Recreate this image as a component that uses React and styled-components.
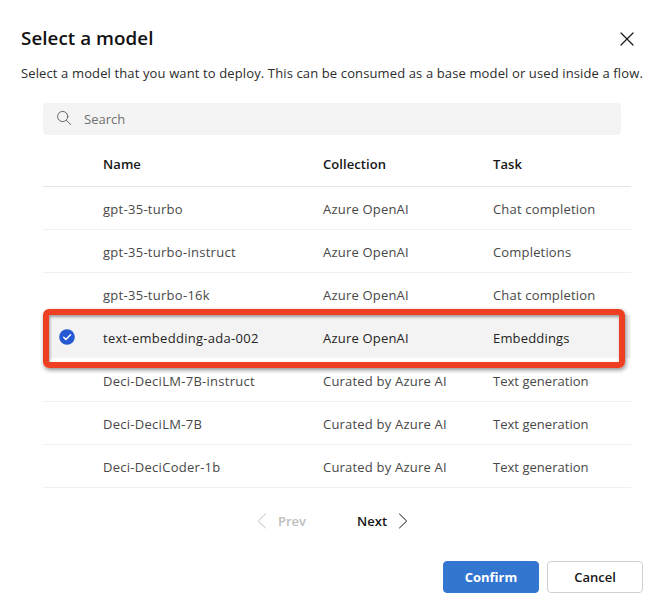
import React from "react";
import styled, { createGlobalStyle } from "styled-components";

const GlobalStyle = createGlobalStyle`
  * { box-sizing: border-box; }
  body {
    margin: 0;
    background: #fff;
    color: #2c2c2c;
    font: 400 13px/20px "Open Sans", "Noto Sans", sans-serif;
  }
  button { font: inherit; color: inherit; padding: 0; border: 0; background: none; }
`;

const Dialog = styled.main`
  width: 664px;
  height: 610px;
  padding: 24px 21px 0;
  overflow: hidden;
  background: #fff;
`;

const Header = styled.header`
  display: flex;
  justify-content: space-between;
  align-items: center;
  height: 28px;
  padding-right: 9px;
`;

const Title = styled.h1`
  margin: 0;
  font-size: 18.8px;
  line-height: 28px;
  font-weight: 600;
  color: #111;
  letter-spacing: 0.05px;
`;

const CloseButton = styled.button`
  display: flex;
  margin-top: 2px;
`;

const Description = styled.p`
  margin: 11px 0 0;
  height: 20px;
  white-space: nowrap;
  letter-spacing: 0.125px;
`;

const Content = styled.section`
  margin: 20px 12px 0 22px;
`;

const SearchBox = styled.label`
  display: flex;
  align-items: center;
  gap: 12px;
  width: 578px;
  height: 32px;
  padding-left: 13px;
  border-radius: 4px;
  background: #f4f4f4;
  color: #707070;

  svg { margin-top: -2px; }
`;

const Table = styled.div`
  position: relative;
  width: 588px;
  margin-top: 8px;
`;

const Row = styled.div`
  display: grid;
  grid-template-columns: 60px 220px 170px 1fr;
  align-items: center;
  height: 43px;
  border-bottom: 1px solid ${(p) => (p.$selected ? "#fff" : "#f0f0f0")};
  background: ${(p) => (p.$selected ? "#f3f3f3" : "transparent")};
  color: ${(p) => (p.$selected ? "#242424" : "#484848")};
  white-space: nowrap;
`;

const HeadRow = styled(Row)`
  height: 44px;
  padding-bottom: 1px;
  border-bottom-color: #e4e4e4;
  color: #161616;
  font-weight: 600;
  letter-spacing: 0.08px;
`;

const Cell = styled.span`
  padding-top: 1px;
  letter-spacing: ${(p) => p.$track}px;
`;

const Check = styled.span`
  display: flex;
  padding-left: 16px;
`;

const Highlight = styled.div`
  position: absolute;
  left: 0;
  top: 166px;
  width: 582px;
  height: 59px;
  border: 6px solid #ef3f22;
  border-radius: 6px;
  box-shadow: 1px 2px 4px rgba(0, 0, 0, 0.45), inset 1px 2px 3px rgba(0, 0, 0, 0.35);
`;

const Pager = styled.nav`
  display: flex;
  height: 20px;
  margin: 23px 0 0 214px;
  gap: 51px;
`;

const PageButton = styled.button`
  display: flex;
  align-items: center;
  gap: 11px;
  font-weight: 600;
  color: ${(p) => (p.$muted ? "#bdbdbd" : "#161616")};
`;

const Actions = styled.footer`
  display: flex;
  justify-content: flex-end;
  gap: 8px;
  margin-top: 30px;
`;

const ActionButton = styled.button`
  && {
    width: 96px;
    height: 32px;
    border: 1px solid ${(p) => (p.$primary ? "#3276cf" : "#d1d1d1")};
    border-radius: 4px;
    background: ${(p) => (p.$primary ? "#3276cf" : "#fff")};
    color: ${(p) => (p.$primary ? "#fff" : "#161616")};
    font-weight: ${(p) => (p.$primary ? 700 : 600)};
  }
`;

const models = [
  ["gpt-35-turbo", "Azure OpenAI", "Chat completion"],
  ["gpt-35-turbo-instruct", "Azure OpenAI", "Completions"],
  ["gpt-35-turbo-16k", "Azure OpenAI", "Chat completion"],
  ["text-embedding-ada-002", "Azure OpenAI", "Embeddings"],
  ["Deci-DeciLM-7B-instruct", "Curated by Azure AI", "Text generation"],
  ["Deci-DeciLM-7B", "Curated by Azure AI", "Text generation"],
  ["Deci-DeciCoder-1b", "Curated by Azure AI", "Text generation"],
];

const Chevron = ({ left }) => (
  <svg width="10" height="16" viewBox="0 0 10 16" fill="none" stroke="currentColor" strokeWidth="1">
    <path d={left ? "M8.7.8 1.2 8l7.5 7.2" : "m1.2.8 7.5 7.2-7.5 7.2"} />
  </svg>
);

export default function App() {
  return (
    <Dialog>
      <GlobalStyle />
      <Header>
        <Title>Select a model</Title>
        <CloseButton aria-label="Close">
          <svg width="14" height="14" viewBox="0 0 14 14" stroke="#161616" strokeWidth="1.2" strokeLinecap="round">
            <path d="m1 1 12 12M13 1 1 13" />
          </svg>
        </CloseButton>
      </Header>
      <Description>
        Select a model that you want to deploy. This can be consumed as a base model or used inside a flow.
      </Description>
      <Content>
        <SearchBox>
          <svg width="16" height="16" viewBox="0 0 16 16" fill="none" stroke="#666" strokeWidth="1" strokeLinecap="round">
            <circle cx="6.7" cy="6.5" r="5.1" />
            <path d="m10.4 10.3 4.4 4.4" />
          </svg>
          <span>Search</span>
        </SearchBox>
        <Table>
          <HeadRow>
            <span />
            <span>Name</span>
            <span>Collection</span>
            <span>Task</span>
          </HeadRow>
          {models.map(([name, collection, task], i) => (
            <Row key={name} $selected={i === 3}>
              <Check>
                {i === 3 && (
                  <svg width="16" height="16" viewBox="0 0 16 16" fill="none">
                    <circle cx="8" cy="8" r="7.8" fill="#2459d3" />
                    <path d="m4.7 8.3 2.2 2.2 4.6-4.7" stroke="#fff" strokeWidth="1.5" strokeLinecap="round" strokeLinejoin="round" />
                  </svg>
                )}
              </Check>
              <Cell $track={0.28}>{name}</Cell>
              <Cell $track={0.2}>{collection}</Cell>
              <Cell $track={task === "Text generation" ? 0.03 : 0.17}>{task}</Cell>
            </Row>
          ))}
          <Highlight />
        </Table>
        <Pager>
          <PageButton $muted><Chevron left />Prev</PageButton>
          <PageButton>Next<Chevron /></PageButton>
        </Pager>
      </Content>
      <Actions>
        <ActionButton $primary>Confirm</ActionButton>
        <ActionButton>Cancel</ActionButton>
      </Actions>
    </Dialog>
  );
}
